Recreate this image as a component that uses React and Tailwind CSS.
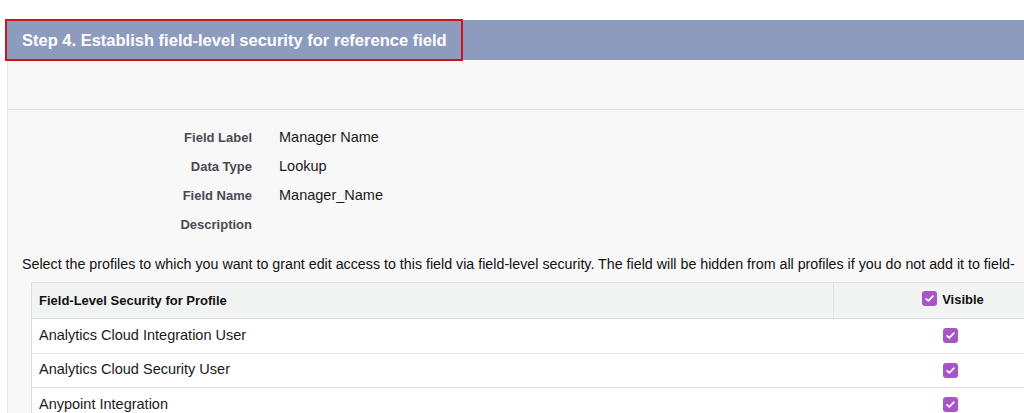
import React from 'react';

const fields = [
  { label: 'Field Label', value: 'Manager Name' },
  { label: 'Data Type', value: 'Lookup' },
  { label: 'Field Name', value: 'Manager_Name' },
  { label: 'Description', value: '' },
];

const profiles = [
  'Analytics Cloud Integration User',
  'Analytics Cloud Security User',
  'Anypoint Integration',
];

const Check = ({ className = '' }) => (
  <span className={`inline-flex items-center justify-center w-[15px] h-[15px] rounded-[3px] bg-[#a855c7] ${className}`}>
    <svg viewBox="0 0 16 16" className="w-[11px] h-[11px]" fill="none">
      <path d="M3 8.5l3.2 3L13 4.5" stroke="white" strokeWidth="2.4" strokeLinecap="round" strokeLinejoin="round" />
    </svg>
  </span>
);

const App = () => {
  return (
    <div className="h-[413px] w-[1024px] overflow-hidden bg-white pt-[20px] font-['Liberation_Sans',Arial,sans-serif]">
      {/* Step header */}
      <div className="relative ml-[7px] h-[40px] bg-[#8d9bbf] flex items-center pl-[15px]">
        <h2 className="text-[16.5px] font-bold text-white">Step 4. Establish field-level security for reference field</h2>
        <div className="absolute left-[-2px] top-[-1px] w-[458px] h-[42px] border-[2px] border-[#d0141c]" />
      </div>

      <div className="ml-[7px] bg-[#f8f8f8] border-l border-[#e6e6e6] h-[400px]">
        <div className="h-[50px] border-b border-[#e2e2e2]" />

        {/* Field details */}
        <div className="pt-[13px]">
          {fields.map((f) => (
            <div key={f.label} className="flex items-center h-[29px]">
              <div className="w-[244px] text-right text-[13px] font-bold text-[#4a4a52]">{f.label}</div>
              <div className="ml-[27px] text-[14.5px] text-[#1a1a1a]">{f.value}</div>
            </div>
          ))}
        </div>

        <p className="mt-[16px] pl-[14px] text-[14.25px] leading-[18px] text-[#111] whitespace-nowrap">
          Select the profiles to which you want to grant edit access to this field via field-level security. The field will be hidden from all profiles if you do not add it to field-
        </p>

        {/* Profiles table */}
        <div className="mt-[9px] ml-[23px] w-[1036px] border-l border-t border-[#e0e0e0] bg-white">
          <div className="flex h-[36px] bg-[#f2f3f3] border-b border-[#dcdcdc]">
            <div className="w-[802px] flex items-center pl-[7px] text-[13px] font-bold text-[#111] border-r border-[#e3e3e3]">
              Field-Level Security for Profile
            </div>
            <div className="flex-1 flex items-center justify-center">
              <div className="flex items-end gap-[5px] pl-[5px]">
                <Check className="mb-[5px]" />
                <span className="text-[13px] font-bold text-[#111] mb-[1px]">Visible</span>
              </div>
            </div>
          </div>
          {profiles.map((p) => (
            <div key={p} className="flex h-[34.5px] border-b border-[#e5e5e5]">
              <div className="w-[802px] flex items-center pl-[7px] text-[14.5px] text-[#1a1a1a]">{p}</div>
              <div className="flex-1 flex items-center justify-center">
                <Check />
              </div>
            </div>
          ))}
        </div>
      </div>
    </div>
  );
};

export default App;
